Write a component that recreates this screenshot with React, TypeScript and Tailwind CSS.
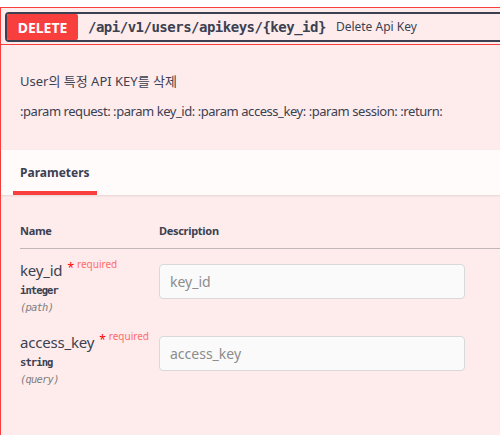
import React from 'react'

const sans = { fontFamily: '"Noto Sans", "Noto Sans CJK KR", sans-serif' }
const mono = { fontFamily: '"DejaVu Sans Mono", "Liberation Mono", monospace' }

interface Param {
  name: string
  type: string
  location: string
}

const params: Param[] = [
  { name: 'key_id', type: 'integer', location: 'path' },
  { name: 'access_key', type: 'string', location: 'query' }
]

function ParamRow({ p }: { p: Param }) {
  return (
    <div className="grid h-[72px] grid-cols-[139px_306px]">
      <div>
        <div className="flex items-start">
          <span className="text-[15px] leading-[18px] tracking-[-0.2px] text-[#3b4151]">{p.name}</span>
          <span className="ml-[5px] mt-[1px] text-[12px] leading-[12px] text-[#ff0000]">*</span>
          <span className="ml-[3px] -mt-[4px] text-[10px] leading-[14px] text-[#ff6b6b]">required</span>
        </div>
        <div className="mt-[3px] text-[10.5px] font-bold leading-[17px] tracking-[-0.9px] text-[#3b4151]" style={mono}>
          {p.type}
        </div>
        <div className="text-[10.5px] italic leading-[17px] tracking-[-0.8px] text-[#808080]" style={mono}>
          ({p.location})
        </div>
      </div>
      <div className="pt-[3px]">
        <input
          placeholder={p.name}
          className="h-[35px] w-full rounded-[4px] border border-[#d9d9d9] bg-[#fafafa] px-[10px] text-[14px] text-[#3b4151] outline-none placeholder:text-[#8c8c8c]"
          style={sans}
        />
      </div>
    </div>
  )
}

export default function App() {
  return (
    <div className="h-[435px] w-full overflow-hidden bg-white pt-[7px]" style={sans}>
      <div className="w-[520px] border border-[#f93e3e] bg-[#feecec] pb-[100px]">
        {/* summary */}
        <div className="border-b border-[#f93e3e] px-[4px] pb-[2px] pt-[4px]">
          <div className="flex h-[30px] items-center rounded-[4px] border-2 border-[#3b4151]">
            <div className="flex h-[26px] w-[71px] items-center justify-center rounded-[2px] bg-[#f93e3e] text-[14px] font-bold text-white">
              DELETE
            </div>
            <span className="ml-[10px] text-[14px] font-semibold tracking-[-0.5px] text-[#3b4151]" style={mono}>
              /api/v1/users/apikeys/{'{key_id}'}
            </span>
            <span className="ml-[10px] text-[12px] text-[#3b4151]">Delete Api Key</span>
          </div>
        </div>

        {/* description */}
        <div className="px-[19px] pb-[30px] pt-[27px] text-[13px] leading-[18px] text-[#3b4151]">
          <p>User의 특정 API KEY를 삭제</p>
          <p className="mt-[12px] tracking-[-0.45px]">:param request: :param key_id: :param access_key: :param session: :return:</p>
        </div>

        {/* tab header */}
        <div className="flex h-[45px] items-end bg-[#fffbfb] px-[12px] shadow-[0_1px_2px_rgba(0,0,0,0.1)]">
          <div className="border-b-4 border-[#f93e3e] px-[7px] pb-[9px] text-[12px] font-bold text-[#3b4151]">
            Parameters
          </div>
        </div>

        {/* table */}
        <div className="pl-[19px] pt-[29px]">
          <div className="grid grid-cols-[139px_1fr] border-b border-[#c0b6b7] pb-[10px] text-[11px] font-bold leading-[14px] tracking-[-0.3px] text-[#3b4151]">
            <span>Name</span>
            <span>Description</span>
          </div>
          <div className="pt-[12px]">
            {params.map((p) => (
              <ParamRow key={p.name} p={p} />
            ))}
          </div>
        </div>
      </div>
    </div>
  )
}
